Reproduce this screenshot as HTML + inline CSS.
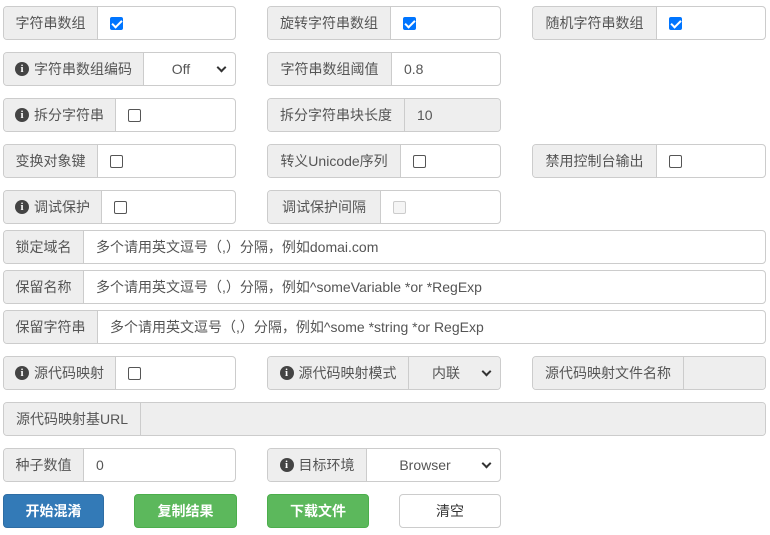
<!DOCTYPE html>
<html><head><meta charset="utf-8"><style>
*{box-sizing:border-box}
body{margin:0;width:770px;height:535px;background:#fff;font-family:"Liberation Sans","Noto Sans CJK SC",sans-serif;font-size:14px;color:#555;position:relative;overflow:hidden}
.g{position:absolute;height:34px;display:flex;border:1px solid #ccc;border-radius:4px;overflow:hidden;background:#fff}
.l{background:#eee;border-right:1px solid #ccc;display:flex;align-items:center;justify-content:center;white-space:nowrap;color:#555;flex:none}
.i{flex:1;display:flex;align-items:center;padding-left:12px;color:#555;white-space:nowrap}
.d{background:#eee}
.cb{width:13px;height:13px;border:1px solid #555;border-radius:2px;background:#fff}
.cb.on{background:#0075ff;border-color:#0075ff;position:relative}
.cb.on:after{content:"";position:absolute;left:3px;top:0px;width:4px;height:8px;border:solid #fff;border-width:0 2px 2px 0;transform:rotate(45deg)}
.cb.dis{border-color:#ccc;background:#f5f5f5}
.ic{display:inline-block;width:14px;height:14px;border-radius:50%;background:#444;color:#fff;font-size:11px;font-weight:bold;line-height:14px;text-align:center;margin-right:5px;font-family:"Liberation Serif",serif}
.sel{justify-content:space-between;padding:0 10px 0 0}
.sel span{flex:1;text-align:center}
.ch{width:7px;height:7px;border:solid #333;border-width:0 2px 2px 0;transform:rotate(45deg);margin-top:-4px}
.b{position:absolute;top:494px;height:34px;border-radius:4px;display:flex;align-items:center;justify-content:center;font-size:14px;color:#fff;font-weight:bold}
</style></head><body>

<div class="g" style="left:3px;top:6px;width:233px"><div class="l" style="width:94px">字符串数组</div><div class="i"><div class="cb on"></div></div></div>
<div class="g" style="left:267px;top:6px;width:234px"><div class="l" style="width:123px">旋转字符串数组</div><div class="i"><div class="cb on"></div></div></div>
<div class="g" style="left:532px;top:6px;width:234px"><div class="l" style="width:124px">随机字符串数组</div><div class="i"><div class="cb on"></div></div></div>

<div class="g" style="left:3px;top:52px;width:233px"><div class="l" style="width:140px"><span class="ic">i</span>字符串数组编码</div><div class="i sel"><span>Off</span><div class="ch"></div></div></div>
<div class="g" style="left:267px;top:52px;width:234px"><div class="l" style="width:124px">字符串数组阈值</div><div class="i">0.8</div></div>

<div class="g" style="left:3px;top:98px;width:233px"><div class="l" style="width:112px"><span class="ic">i</span>拆分字符串</div><div class="i"><div class="cb"></div></div></div>
<div class="g" style="left:267px;top:98px;width:234px"><div class="l" style="width:137px">拆分字符串块长度</div><div class="i d">10</div></div>

<div class="g" style="left:3px;top:144px;width:233px"><div class="l" style="width:94px">变换对象键</div><div class="i"><div class="cb"></div></div></div>
<div class="g" style="left:267px;top:144px;width:234px"><div class="l" style="width:133px">转义Unicode序列</div><div class="i"><div class="cb"></div></div></div>
<div class="g" style="left:532px;top:144px;width:234px"><div class="l" style="width:124px">禁用控制台输出</div><div class="i"><div class="cb"></div></div></div>

<div class="g" style="left:3px;top:190px;width:233px"><div class="l" style="width:98px"><span class="ic">i</span>调试保护</div><div class="i"><div class="cb"></div></div></div>
<div class="g" style="left:267px;top:190px;width:234px"><div class="l" style="width:113px">调试保护间隔</div><div class="i"><div class="cb dis"></div></div></div>

<div class="g" style="left:3px;top:230px;width:763px"><div class="l" style="width:80px">锁定域名</div><div class="i">多个请用英文逗号（,）分隔，例如domai.com</div></div>
<div class="g" style="left:3px;top:270px;width:763px"><div class="l" style="width:80px">保留名称</div><div class="i">多个请用英文逗号（,）分隔，例如^someVariable *or *RegExp</div></div>
<div class="g" style="left:3px;top:310px;width:763px"><div class="l" style="width:94px">保留字符串</div><div class="i">多个请用英文逗号（,）分隔，例如^some *string *or RegExp</div></div>

<div class="g" style="left:3px;top:356px;width:233px"><div class="l" style="width:112px"><span class="ic">i</span>源代码映射</div><div class="i"><div class="cb"></div></div></div>
<div class="g" style="left:267px;top:356px;width:234px"><div class="l" style="width:141px"><span class="ic">i</span>源代码映射模式</div><div class="i sel d"><span>内联</span><div class="ch"></div></div></div>
<div class="g" style="left:532px;top:356px;width:234px"><div class="l" style="width:151px">源代码映射文件名称</div><div class="i d"></div></div>

<div class="g" style="left:3px;top:402px;width:763px"><div class="l" style="width:137px">源代码映射基URL</div><div class="i d"></div></div>

<div class="g" style="left:3px;top:448px;width:233px"><div class="l" style="width:80px">种子数值</div><div class="i">0</div></div>
<div class="g" style="left:267px;top:448px;width:234px"><div class="l" style="width:99px"><span class="ic">i</span>目标环境</div><div class="i sel"><span>Browser</span><div class="ch"></div></div></div>

<div class="b" style="left:3px;width:101px;background:#337ab7;border:1px solid #2e6da4">开始混淆</div>
<div class="b" style="left:134px;width:103px;background:#5cb85c;border:1px solid #4cae4c">复制结果</div>
<div class="b" style="left:267px;width:102px;background:#5cb85c;border:1px solid #4cae4c">下载文件</div>
<div class="b" style="left:399px;width:102px;background:#fff;border:1px solid #ccc;color:#333;font-weight:normal">清空</div>
</body></html>
